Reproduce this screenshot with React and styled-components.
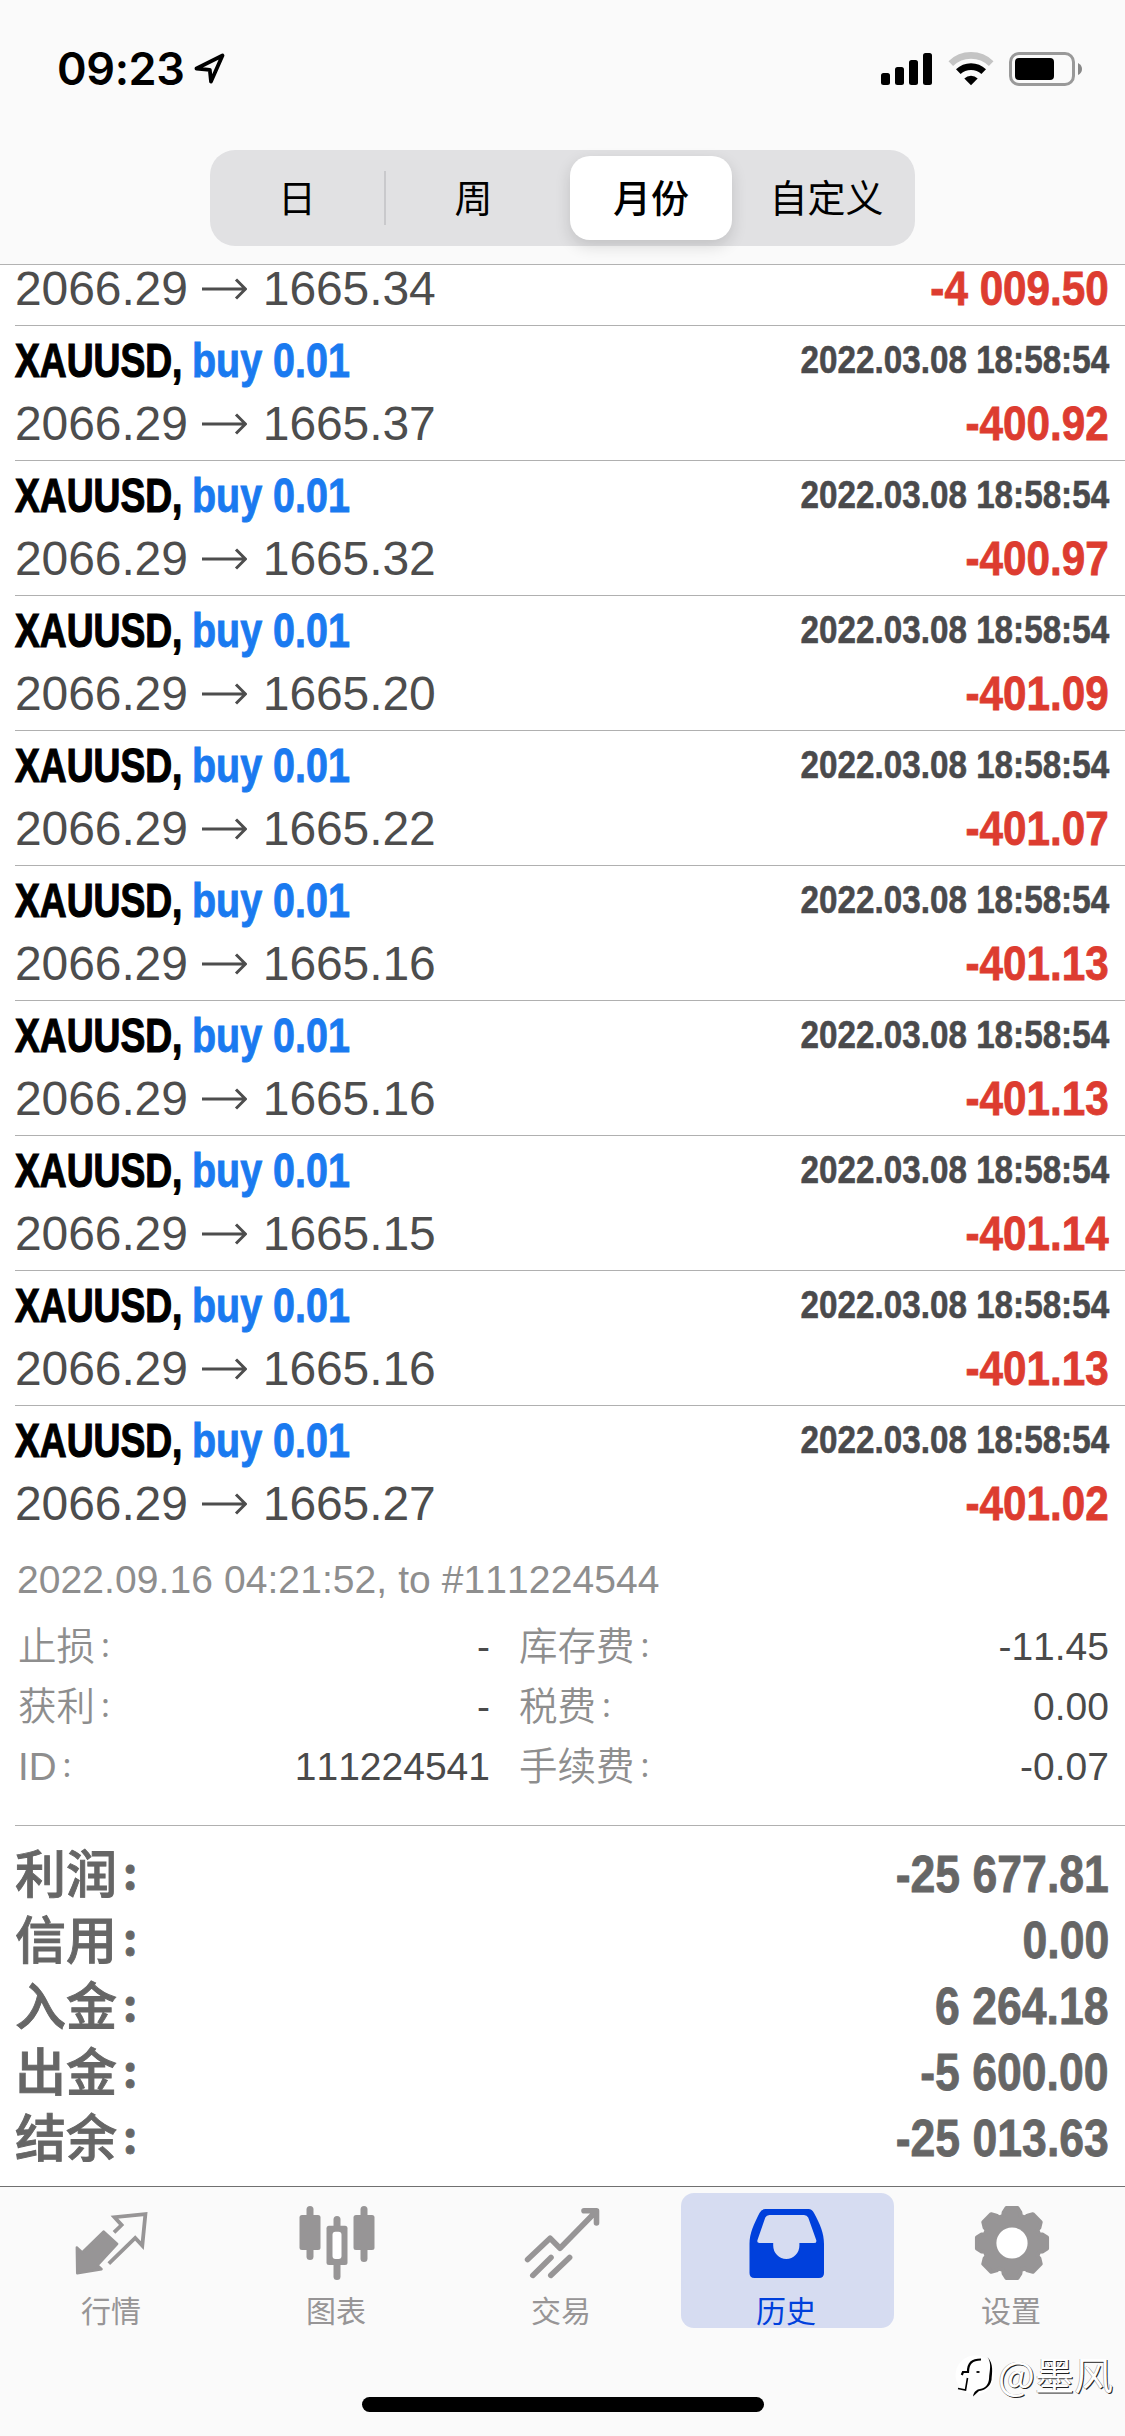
import React from 'react';
import styled, { createGlobalStyle } from 'styled-components';

const sans = '"Liberation Sans", "Noto Sans CJK SC", sans-serif';
const cjk = '"Noto Sans CJK SC", sans-serif';

const deals = [
  { close: '1665.37', profit: '-400.92' },
  { close: '1665.32', profit: '-400.97' },
  { close: '1665.20', profit: '-401.09' },
  { close: '1665.22', profit: '-401.07' },
  { close: '1665.16', profit: '-401.13' },
  { close: '1665.16', profit: '-401.13' },
  { close: '1665.15', profit: '-401.14' },
  { close: '1665.16', profit: '-401.13' },
  { close: '1665.27', profit: '-401.02' },
];

const details = [
  ['止损', '-', '库存费', '-11.45'],
  ['获利', '-', '税费', '0.00'],
  ['ID', '111224541', '手续费', '-0.07'],
];

const totals = [
  ['利润', '-25 677.81'],
  ['信用', '0.00'],
  ['入金', '6 264.18'],
  ['出金', '-5 600.00'],
  ['结余', '-25 013.63'],
];

const App = () => (
  <Screen>
    <GlobalStyle />
    <Header>
      <StatusBar />
      <Periods />
    </Header>
    <History />
    <Details />
    <Totals />
    <TabBar />
    <Watermark />
  </Screen>
);

const GlobalStyle = createGlobalStyle`
  * {
    box-sizing: border-box;
  }

  body {
    margin: 0;
    background: #fff;
    font-family: ${sans};
    font-kerning: none;
  }

  svg {
    display: block;
    flex: none;
  }
`;

const Screen = styled.div`
  position: relative;
  display: flex;
  flex-direction: column;
  width: 1125px;
  height: 2436px;
  overflow: hidden;
  background: #fff;
`;

const Header = styled.header`
  flex: none;
  height: 265px;
  background: #fafafa;
  border-bottom: 1px solid #b2b2b2;
`;

const StatusBar = () => (
  <StatusRow>
    <Clock>09:23</Clock>
    <LocationArrow viewBox="0 0 32 32">
      <path d="M2.5 15.5 28.5 2.5 17 28.5 15.8 16.8Z" />
    </LocationArrow>
    <StatusIcons>
      <svg width="52" height="34" viewBox="0 0 52 34">
        <rect x="0" y="21" width="9" height="12" rx="2.5" />
        <rect x="14" y="15" width="9" height="18" rx="2.5" />
        <rect x="28" y="8" width="9" height="25" rx="2.5" />
        <rect x="42" y="1" width="9" height="32" rx="2.5" />
      </svg>
      <svg width="46" height="34" viewBox="0 0 46 34" fill="none">
        <path d="M2.8 11.6a29 29 0 0 1 40.4 0" stroke="#c4c4c4" strokeWidth="6.6" />
        <path d="M10.3 19.7a18.3 18.3 0 0 1 25.4 0" stroke="#000" strokeWidth="6.6" />
        <path d="M23 33.2 16.3 26.4a9.5 9.5 0 0 1 13.4 0Z" fill="#000" />
      </svg>
      <svg width="75" height="36" viewBox="0 0 75 36">
        <rect x="1.5" y="2.5" width="63" height="31" rx="8.5" fill="none" stroke="#999" strokeWidth="3" />
        <rect x="6" y="7" width="39" height="22" rx="4" />
        <path d="M69 12q4 2 4 6t-4 6z" fill="#888" />
      </svg>
    </StatusIcons>
  </StatusRow>
);

const StatusRow = styled.div`
  height: 150px;
  padding: 39px 41px 0 57px;
  display: flex;
  align-items: flex-start;
`;

const Clock = styled.div`
  width: 137px;
  font: 600 45px/60px Inter, sans-serif;
  letter-spacing: -0.4px;
`;

const LocationArrow = styled.svg`
  width: 32px;
  height: 32px;
  margin-top: 14px;
  fill: none;
  stroke: #000;
  stroke-width: 3.8;
  stroke-linejoin: round;
`;

const StatusIcons = styled.div`
  margin: 12px 0 0 auto;
  display: flex;
  align-items: center;
  gap: 15px;
`;

const Periods = () => (
  <Segments>
    <Segment>日</Segment>
    <Divider />
    <Segment>周</Segment>
    <Segment $active>月份</Segment>
    <Segment>自定义</Segment>
  </Segments>
);

const Segments = styled.div`
  width: 705px;
  height: 96px;
  margin: 0 auto;
  padding: 6px 0;
  display: grid;
  grid-template-columns: 174px 2px 175px 177px 177px;
  align-items: center;
  background: #e1e1e3;
  border-radius: 25px;
`;

const Segment = styled.div`
  height: 84px;
  margin: ${props => (props.$active ? '0 6px 0 9px' : '0')};
  font: ${props => (props.$active ? 500 : 400)} 38px/80px ${cjk};
  text-align: center;
  color: #000;
  background: ${props => (props.$active ? '#fff' : 'transparent')};
  border-radius: 20px;
  box-shadow: ${props => (props.$active ? '0 6px 16px rgba(0, 0, 0, 0.14)' : 'none')};
`;

const Divider = styled.div`
  height: 54px;
  background: #c9c9cc;
`;

const History = () => (
  <div>
    <ClippedDeal>
      <Prices close="1665.34" />
      <Profit>-4 009.50</Profit>
    </ClippedDeal>
    {deals.map((deal, i) => (
      <Deal key={i}>
        <Line>
          <Symbol>XAUUSD,</Symbol>
          <Side>buy 0.01</Side>
          <Time>2022.03.08 18:58:54</Time>
        </Line>
        <Line>
          <Prices close={deal.close} />
          <Profit>{deal.profit}</Profit>
        </Line>
      </Deal>
    ))}
  </div>
);

const Line = styled.div`
  height: 63px;
  padding-right: 16px;
  display: flex;
  line-height: 63px;
  white-space: nowrap;
`;

const ClippedDeal = styled(Line)`
  height: 60px;
  margin-left: 15px;
  line-height: 47px;
`;

const Deal = styled.div`
  height: 135px;
  margin-left: 15px;
  padding-top: 3px;
  border-top: 1px solid #b0b0b0;
`;

// squeezes bold text to the proportions of a condensed face
const Condensed = styled.div`
  font-size: 48px;
  font-weight: 700;
  -webkit-text-stroke: 0.8px currentColor;
  transform: scaleX(${props => props.$scale || 0.88});
  transform-origin: left;
`;

const Symbol = styled(Condensed).attrs({ $scale: 0.775 })`
  width: 177px;
  color: #000;
  -webkit-text-stroke-width: 1.2px;
`;

const Side = styled(Condensed).attrs({ $scale: 0.822 })`
  color: #1a7af0;
  -webkit-text-stroke-width: 0.9px;
`;

const Time = styled(Condensed).attrs({ $scale: 0.852 })`
  margin-left: auto;
  font-size: 39px;
  line-height: 61px;
  color: #4a4a4c;
  -webkit-text-stroke-width: 0.6px;
  transform-origin: right;
`;

const Profit = styled(Condensed)`
  margin-left: auto;
  color: #dd3c30;
  transform-origin: right;
`;

const Prices = ({ close }) => (
  <PriceRange>
    <span>2066.29</span>
    <Arrow viewBox="0 0 45 22">
      <path d="M0 11h43M34 1.5 43.5 11 34 20.5" />
    </Arrow>
    <span>{close}</span>
  </PriceRange>
);

const PriceRange = styled.div`
  display: flex;
  align-items: center;
  align-self: flex-start;
  font-size: 48px;
  letter-spacing: -0.1px;
  color: #4d4d4d;
`;

const Arrow = styled.svg`
  width: 45px;
  height: 22px;
  margin: 0 16px 0 14px;
  fill: none;
  stroke: #4d4d4d;
  stroke-width: 3;
`;

const Details = () => (
  <DetailsBlock>
    <Note>2022.09.16 04:21:52, to #111224544</Note>
    {details.map(([left, leftValue, right, rightValue]) => (
      <DetailRow key={right}>
        <Label>
          {left}
          <Colon>:</Colon>
        </Label>
        <Value>{leftValue}</Value>
        <Label $second>
          {right}
          <Colon>:</Colon>
        </Label>
        <Value>{rightValue}</Value>
      </DetailRow>
    ))}
  </DetailsBlock>
);

const DetailsBlock = styled.div`
  height: 285px;
  padding: 10px 16px 0 17px;
  font-size: 39px;
  line-height: 60px;
  color: #8e8e8e;
`;

const Note = styled.div`
  margin-bottom: 7px;
  letter-spacing: 0.08px;
`;

const DetailRow = styled.div`
  height: 60px;
  display: grid;
  grid-template-columns: 180px 293px 181px 1fr;
`;

const Label = styled.div`
  padding-left: ${props => (props.$second ? '29px' : '1px')};
  font-weight: 350;
  font-size: 38.5px;
  white-space: nowrap;
`;

const Colon = styled.span`
  display: inline-block;
  margin-left: 6px;
  font-family: ${cjk};
  font-size: 0.86em;
  line-height: 1;
  transform: translateY(-0.1em);
`;

const Value = styled.div`
  text-align: right;
  color: #4a4a4a;
`;

const Totals = () => (
  <TotalsBlock>
    {totals.map(([name, value]) => (
      <TotalRow key={name}>
        <TotalName>
          {name}
          <Colon>:</Colon>
        </TotalName>
        <TotalValue>{value}</TotalValue>
      </TotalRow>
    ))}
  </TotalsBlock>
);

const TotalsBlock = styled.div`
  height: 361px;
  margin-left: 15px;
  padding: 16px 16px 0 0;
  border-top: 1px solid #b0b0b0;
`;

const TotalRow = styled.div`
  height: 66px;
  display: flex;
  justify-content: space-between;
  line-height: 66px;
  color: #666;
`;

const TotalName = styled.div`
  padding-top: 1px;
  font-size: 51px;
  font-weight: 500;
  -webkit-text-stroke: 0.9px currentColor;

  ${Colon} {
    font-weight: 700;
  }
`;

const TotalValue = styled(Condensed).attrs({ $scale: 0.874 })`
  font-size: 51px;
  transform-origin: right;
`;

const gearPoints = Array.from({ length: 8 }, (_, i) =>
  [[-18, 28.5], [-15.5, 31.5], [-9, 35.5], [9, 35.5], [15.5, 31.5], [18, 28.5]].map(
    ([angle, r]) => {
      const a = ((i * 45 + angle) * Math.PI) / 180;
      return `${39 + r * Math.sin(a)},${41 - r * Math.cos(a)}`;
    }
  )
)
  .flat()
  .join(' ');

const QuotesIcon = () => (
  <TabIcon viewBox="0 0 80 80">
    <path
      d="M3.8 45.5 9.2 50.4 30.5 29.5 44.2 42 24.6 63.3 28.6 67.2 4.2 71.3Z"
      strokeWidth="2.4"
    />
    <path
      d="M41 30.4 48.6 23 41.5 15.2 72.4 12.2 69.3 43.6 62.2 36 35.8 61.6"
      fill="none"
      strokeWidth="3.8"
      strokeLinejoin="miter"
    />
  </TabIcon>
);

const ChartIcon = () => (
  <TabIcon viewBox="0 0 80 80">
    <g stroke="none">
      <rect x="8.5" y="4" width="7" height="54" rx="3.5" />
      <rect x="1.5" y="13" width="21" height="35" rx="2.5" />
      <rect x="35.5" y="14" width="7" height="64" rx="3.5" />
      <rect x="28.5" y="23.7" width="21" height="39.3" rx="2.5" />
      <rect x="34.5" y="29.7" width="9" height="27.3" rx="3" fill="#fff" />
      <rect x="62.5" y="4" width="7" height="56" rx="3.5" />
      <rect x="55.5" y="13" width="21" height="35" rx="2.5" />
    </g>
  </TabIcon>
);

const TradeIcon = () => (
  <TabIcon viewBox="0 0 80 80">
    <path
      d="M4.6 57.5 27.1 36.2 37 46.2 73 9.5M61 8.7H73.5V21M9.8 73.4 28 55.5M27.8 73.4 46.6 55.5"
      fill="none"
      strokeWidth="5.6"
      strokeLinecap="round"
    />
  </TabIcon>
);

const HistoryIcon = () => (
  <TabIcon viewBox="0 0 80 80">
    <path
      stroke="none"
      fillRule="evenodd"
      d="M17.5 7H60.5Q64 7 66 11C72 22 76 31 76 42V71Q76 76 71 76H6.5Q1.5 76 1.5 71V42C1.5 31 6 22 11.5 11Q13.5 7 17.5 7ZM21.5 13H56Q59 13 60.2 15.5L68.2 38Q69 41 66 41H51.4V43.5A13.1 13.5 0 0 1 25.2 43.5V41H11.5Q8.5 41 9.5 38L17.3 15.5Q18.5 13 21.5 13Z"
    />
  </TabIcon>
);

const SettingsIcon = () => (
  <TabIcon viewBox="0 0 80 80">
    <polygon points={gearPoints} strokeWidth="4" />
    <circle cx="39" cy="41" r="15.6" fill="#fff" stroke="none" />
  </TabIcon>
);

const tabs = [
  { name: '行情', Icon: QuotesIcon },
  { name: '图表', Icon: ChartIcon },
  { name: '交易', Icon: TradeIcon },
  { name: '历史', Icon: HistoryIcon, active: true },
  { name: '设置', Icon: SettingsIcon },
];

const TabBar = () => (
  <Footer>
    <Tabs>
      {tabs.map(({ name, Icon, active }) => (
        <Tab key={name} $active={active}>
          <Icon />
          <TabName>{name}</TabName>
        </Tab>
      ))}
    </Tabs>
    <HomeIndicator />
  </Footer>
);

const Footer = styled.footer`
  flex: none;
  height: 250px;
  padding-top: 6px;
  background: #fafafa;
  border-top: 1px solid #707070;
`;

const Tabs = styled.nav`
  display: grid;
  grid-template-columns: repeat(5, 1fr);
`;

const Tab = styled.div`
  height: 135px;
  margin: 0 6px;
  padding-top: 9px;
  display: flex;
  flex-direction: column;
  align-items: center;
  gap: 7px;
  color: ${props => (props.$active ? '#0040dc' : '#979596')};
  background: ${props => (props.$active ? '#d6dcf1' : 'transparent')};
  border-radius: 13px;
`;

const TabIcon = styled.svg`
  width: 80px;
  height: 80px;
  fill: currentColor;
  stroke: currentColor;
  stroke-linejoin: round;
`;

const TabName = styled.div`
  padding-right: 3px;
  font: 400 30px/40px ${cjk};
`;

const HomeIndicator = styled.div`
  width: 402px;
  height: 15px;
  margin: 69px auto 0;
  background: #000;
  border-radius: 8px;
`;

const Watermark = () => (
  <Author>
    <svg width="46" height="46" viewBox="0 0 46 46" fill="none">
      <circle cx="23" cy="22" r="19.5" fill="#fff" />
      <path d="M9.8 22 11 19H16C16 10 20 6.5 29 6.5" stroke="#000" strokeWidth="2.2" />
      <path d="M15.5 25 13.5 37 6 35.5" stroke="#000" strokeWidth="1.6" />
      <path d="M24.5 19h3" stroke="#000" strokeWidth="1.8" />
      <path
        d="M35.5 4C42 11 40 20 39.5 27 38 35 31 37.5 27 38L21 43.5C22 38 25 36.5 28 36 34 35 36.5 31 37 26 37.5 17 40 11 35.5 4Z"
        fill="#000"
      />
    </svg>
    <AuthorName>@墨风</AuthorName>
  </Author>
);

const Author = styled.div`
  position: absolute;
  right: 12px;
  bottom: 35px;
  display: flex;
  align-items: flex-start;
`;

const AuthorName = styled.div`
  margin-top: -8px;
  font: 400 39px/56px ${cjk};
  color: #fff;
  text-shadow: 1px 1px 0 #222, -0.5px -0.5px 0 #999;
`;

export default App;
